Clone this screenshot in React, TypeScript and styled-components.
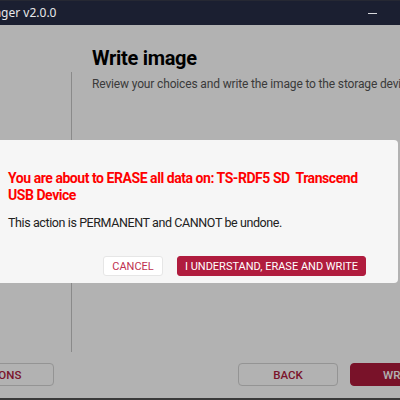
import React from "react";
import styled, { createGlobalStyle } from "styled-components";

const Global = createGlobalStyle`
  html, body { margin: 0; padding: 0; background: #2b2b2b; }
  body { font-family: Roboto, "Noto Sans", Arial, sans-serif; }
  * { box-sizing: border-box; }
`;

const Viewport = styled.div`
  width: 400px;
  height: 400px;
  overflow: hidden;
  position: relative;
  background: #3a3a3a;
`;

const Window = styled.div`
  width: 637px;
  margin-left: -150px;
  height: 398px;
  display: flex;
  flex-direction: column;
  background: #ffffff;
`;

const TitleBar = styled.div`
  height: 25px;
  flex: none;
  display: flex;
  align-items: center;
  background: #1b1f31;
  border-top: 1px solid #262833;
  color: #e8e8ea;
  font-family: "Noto Sans", "Open Sans", sans-serif;
  font-size: 12px;
  padding-left: 55px;
`;

const TitleText = styled.span`
  flex: 1;
  line-height: 1;
`;

const WinButton = styled.div`
  width: 46px;
  height: 24px;
  display: flex;
  align-items: center;
  justify-content: center;
`;

const MinGlyph = styled.span`
  width: 9px;
  height: 1px;
  background: #d8d8dc;
`;

const AppArea = styled.div`
  flex: 1;
  position: relative;
  display: flex;
  flex-direction: column;
  background: #ffffff;
`;

const Body = styled.div`
  flex: 1;
  display: flex;
`;

const Sidebar = styled.div`
  width: 221px;
  flex: none;
`;

const Divider = styled.div`
  width: 1px;
  flex: none;
  background: #c6c6c6;
  margin: 47px 0 11px;
`;

const Content = styled.div`
  flex: 1;
  padding: 20px 0 0 20px;
`;

const Heading = styled.h1`
  margin: 0;
  font-size: 20px;
  font-weight: 700;
  letter-spacing: -0.3px;
  color: #000;
  line-height: 26px;
`;

const Sub = styled.p`
  margin: 4px 0 0;
  font-size: 12px;
  letter-spacing: -0.15px;
  color: #555;
  line-height: 18px;
  white-space: nowrap;
`;

const Footer = styled.div`
  height: 35px;
  flex: none;
  display: flex;
  align-items: flex-start;
  padding: 0 37px 0 65px;
`;

const FooterRight = styled.div`
  margin-left: auto;
  display: flex;
  gap: 12px;
`;

const Btn = styled.button<{ $primary?: boolean; $w: number }>`
  width: ${(p) => p.$w}px;
  height: 23px;
  border-radius: 4px;
  border: 1px solid ${(p) => (p.$primary ? "#ae1b3c" : "#d4d4d4")};
  background: ${(p) => (p.$primary ? "#ae1b3c" : "#ffffff")};
  color: ${(p) => (p.$primary ? "#ffffff" : "#b01c3e")};
  font-family: Roboto, sans-serif;
  font-size: 11.5px;
  font-weight: 500;
  padding: 0;
  display: flex;
  align-items: center;
  justify-content: center;
  white-space: nowrap;
`;

const Overlay = styled.div`
  position: absolute;
  inset: 0;
  background: rgba(0, 0, 0, 0.3);
`;

const Dialog = styled.div`
  position: absolute;
  top: 115px;
  left: 126px;
  width: 422px;
  height: 143px;
  background: #f6f6f6;
  border-radius: 4px;
  padding: 30px 32px 0 32px;
  display: flex;
  flex-direction: column;
`;

const Warning = styled.div`
  color: #ff0000;
  font-size: 14px;
  font-weight: 700;
  letter-spacing: -0.45px;
  line-height: 17px;
  white-space: pre-wrap;
  margin-right: -18px;
`;

const Notice = styled.div`
  margin-top: 10px;
  color: #222;
  font-size: 12.5px;
  letter-spacing: -0.4px;
  line-height: 17px;
`;

const DialogActions = styled.div`
  margin-top: 25px;
  display: flex;
  justify-content: flex-end;
  gap: 14px;
`;

const DlgBtn = styled.button<{ $primary?: boolean; $w: number }>`
  width: ${(p) => p.$w}px;
  height: 20px;
  border-radius: 3px;
  border: 1px solid ${(p) => (p.$primary ? "#b01c3e" : "#e6e6e6")};
  background: ${(p) => (p.$primary ? "#b01c3e" : "#ffffff")};
  color: ${(p) => (p.$primary ? "#ffffff" : "#c0304f")};
  font-family: Roboto, sans-serif;
  font-size: 11px;
  padding: 0;
  display: flex;
  align-items: center;
  justify-content: center;
  white-space: nowrap;
`;

export default function App() {
  return (
    <>
      <Global />
      <Viewport>
        <Window>
          <TitleBar>
            <TitleText>Raspberry Pi Imager v2.0.0</TitleText>
            <WinButton>
              <MinGlyph />
            </WinButton>
            <WinButton />
            <WinButton />
          </TitleBar>
          <AppArea>
            <Body>
              <Sidebar />
              <Divider />
              <Content>
                <Heading>Write image</Heading>
                <Sub>Review your choices and write the image to the storage device.</Sub>
              </Content>
            </Body>
            <Footer>
              <Btn $w={139}>APP OPTIONS</Btn>
              <FooterRight>
                <Btn $w={100}>BACK</Btn>
                <Btn $w={100} $primary>
                  WRITE
                </Btn>
              </FooterRight>
            </Footer>
            <Overlay />
            <Dialog>
              <Warning>{"You are about to ERASE all data on: TS-RDF5 SD  Transcend USB Device"}</Warning>
              <Notice>This action is PERMANENT and CANNOT be undone.</Notice>
              <DialogActions>
                <DlgBtn $w={60}>CANCEL</DlgBtn>
                <DlgBtn $w={189} $primary>
                  I UNDERSTAND, ERASE AND WRITE
                </DlgBtn>
              </DialogActions>
            </Dialog>
          </AppArea>
        </Window>
      </Viewport>
    </>
  );
}
